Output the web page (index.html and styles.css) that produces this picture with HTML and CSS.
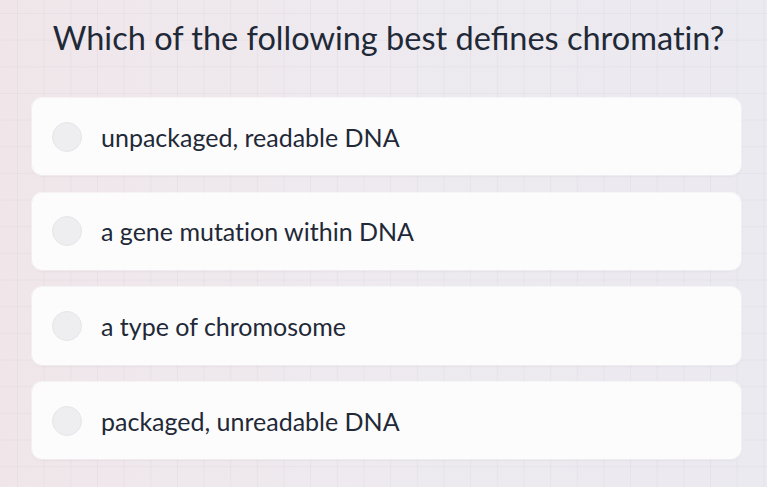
FILE: index.html
```html
<!DOCTYPE html>
<html>
<head>
<meta charset="utf-8">
<link rel="stylesheet" href="styles.css">
</head>
<body>
<main class="quiz">
  <h1 class="question">Which of the following best defines chromat&zwnj;in?</h1>
  <ul class="options">
    <li class="option"><span class="radio"></span><span class="label">unpackaged, readable DNA</span></li>
    <li class="option"><span class="radio"></span><span class="label">a gene mutat&zwnj;ion within DNA</span></li>
    <li class="option"><span class="radio"></span><span class="label">a type of chromosome</span></li>
    <li class="option"><span class="radio"></span><span class="label">packaged, unreadable DNA</span></li>
  </ul>
</main>
</body>
</html>
```

FILE: styles.css
```css
html, body {
  margin: 0;
  padding: 0;
  height: 100%;
}
body {
  font-family: Lato, "Open Sans", sans-serif;
  color: #1f2937;
  background-color: #eee8ed;
  background-image:
    linear-gradient(to right, rgba(90, 70, 100, 0.045) 1px, transparent 1px),
    linear-gradient(to bottom, rgba(90, 70, 100, 0.045) 1px, transparent 1px),
    linear-gradient(to right, #f0e6ea 0%, #eeeaef 45%, #ebeaf0 100%);
  background-size: 26.667px 26.667px, 26.667px 26.667px, 100% 100%;
  background-position: 17px 13px, 17px 13px, 0 0;
  overflow: hidden;
}
.quiz {
  box-sizing: border-box;
  width: 767px;
  padding: 13.5px 26px 0 32px;
  display: flex;
  flex-direction: column;
}
.question {
  margin: 0;
  font-size: 32.5px;
  font-weight: 400;
  line-height: 48px;
  text-align: center;
  color: #1f2937;
  padding-left: 4px;
}
.options {
  list-style: none;
  margin: 36.5px 0 0 0;
  padding: 0;
  display: flex;
  flex-direction: column;
  gap: 17.33px;
}
.option {
  box-sizing: border-box;
  height: 77.33px;
  display: flex;
  align-items: center;
  padding-left: 20px;
  gap: 19px;
  background: rgba(255, 255, 255, 0.86);
  border-radius: 10px;
  box-shadow: 0 1px 3px rgba(60, 40, 70, 0.08), 0 0 0 1px rgba(255, 255, 255, 0.6);
}
.radio {
  box-sizing: border-box;
  width: 30px;
  height: 30px;
  border-radius: 50%;
  background: #eeeef1;
  border: 1px solid #e6e6ea;
  flex: none;
}
.label {
  font-size: 25px;
  line-height: 28px;
  color: #1f2937;
}
```
